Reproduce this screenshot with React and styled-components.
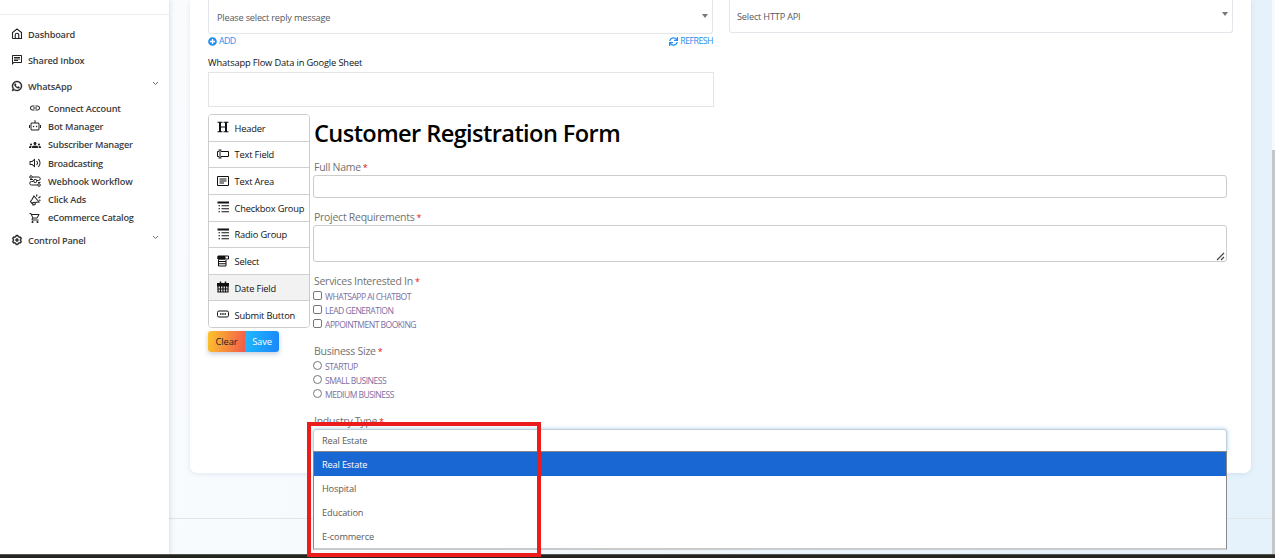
import styled, { createGlobalStyle } from "styled-components";
import {
  RiWhatsappLine,
  RiRobot2Line,
  RiVolumeUpLine,
  RiSettings3Line,
} from "react-icons/ri";
import {
  MdGroups,
  MdLink,
  MdOutlineChat,
  MdOutlineShoppingCart,
} from "react-icons/md";
import { FaPlusCircle, FaSync } from "react-icons/fa";

const GlobalStyle = createGlobalStyle`
  * {
    box-sizing: border-box;
  }
  body {
    margin: 0;
    overflow: hidden;
    font-family: "Open Sans", "Noto Sans", sans-serif;
  }
`;

const Page = styled.div`
  display: flex;
  flex-direction: column;
  width: 1275px;
  height: 558px;
`;

const Body = styled.div`
  display: flex;
  height: 554px;
`;

const Taskbar = styled.div`
  height: 4px;
  background: #23231f;
  border-top: 1px solid #55554f;
`;

const Sidebar = styled.nav`
  width: 169px;
  padding-top: 14px;
  background: #fff;
  box-shadow: 0 0 6px rgba(70, 90, 110, 0.25);
  z-index: 1;
`;

const Divider = styled.div`
  height: 1px;
  margin-bottom: 6px;
  background: #ededed;
`;

const Item = styled.div`
  display: flex;
  align-items: center;
  height: 26px;
  padding: 0 10px 0 11px;
  color: #3c3c3c;
  font-size: 9.2px;
  font-weight: 600;
  letter-spacing: ${(props) => props.$spacing || "-0.18px"};

  svg {
    width: 12px;
    height: 12px;
    margin-right: 5px;
    flex: none;
    color: #222;
  }
`;

const Chevron = styled.svg`
  && {
    width: 7px;
    height: 5px;
    margin: -5px 0 0 auto;
  }
`;

const SubItem = styled(Item)`
  height: 18.3px;
  padding-left: 29px;
  letter-spacing: ${(props) => props.$spacing || "-0.15px"};

  svg {
    margin-right: 7px;
  }
`;

const Main = styled.main`
  flex: 1;
  display: flex;
  flex-direction: column;
  background: linear-gradient(100deg, #fafcfe 0%, #f0f7fc 45%, #e5f2fb 85%);
`;

const Card = styled.section`
  width: 1061px;
  height: 473px;
  margin-left: 21px;
  padding: 0 18px;
  background: #fff;
  border-radius: 0 0 7px 7px;
  box-shadow: 0 1px 5px rgba(100, 130, 160, 0.16);
`;

const Footer = styled.footer`
  margin-top: 45px;
  border-top: 1px solid #e0e5e8;
`;

const Scrollbar = styled.div`
  width: 3px;
  padding-top: 150px;
  background: #f8f9fa;
`;

const Thumb = styled.div`
  height: 404px;
  background: #c6c6c6;
`;

const TopRow = styled.div`
  display: flex;
  gap: 16px;
  height: 49px;
`;

const Column = styled.div`
  width: ${(props) => props.$width};
`;

const SelectBox = styled.div`
  display: flex;
  justify-content: space-between;
  align-items: center;
  height: ${(props) => props.$height};
  padding: ${(props) => props.$padding};
  border: 1px solid #e2e6ea;
  border-top: 0;
  border-radius: 0 0 3px 3px;
  color: #55595e;
  font-size: 9.2px;
  letter-spacing: -0.2px;
`;

const Arrow = styled.span`
  margin-top: -4px;
  border: 3px solid transparent;
  border-top: 4px solid #777;
  border-bottom: 0;
`;

const Links = styled.div`
  display: flex;
  justify-content: space-between;
  padding-top: 1px;
  color: #1f8ef1;
  font-size: 8.8px;
  line-height: 13px;
`;

const Link = styled.a`
  display: flex;
  align-items: center;
  gap: 2px;
  letter-spacing: -0.55px;

  svg {
    width: 9px;
    height: 9px;
  }
`;

const SheetLabel = styled.label`
  display: block;
  height: 23px;
  padding-top: 7px;
  color: #111;
  font-size: 9.3px;
  line-height: 14px;
  letter-spacing: -0.15px;
`;

const SheetInput = styled.div`
  width: 506px;
  height: 35px;
  border: 1px solid #e2e4e6;
`;

const Builder = styled.div`
  display: flex;
  gap: 4px;
  padding-top: 7px;
`;

const Palette = styled.div`
  width: 102px;
  height: 214px;
  margin-right: -1px;
  border: 1px solid #ccc;
  border-radius: 4px;
  overflow: hidden;
`;

const PaletteItem = styled.div`
  display: flex;
  align-items: center;
  height: 26.65px;
  padding: 1px 0 0 7.5px;
  border-bottom: 1px solid #cfcfcf;
  background: ${(props) => (props.$active ? "#f2f2f2" : "#fff")};
  color: #111;
  font-size: 9.3px;
  white-space: nowrap;
  letter-spacing: -0.17px;

  svg {
    width: 12px;
    height: 12px;
    margin: -2px 6px 0 0;
    flex: none;
  }

  &:last-child {
    border-bottom: 0;
  }
`;

const Buttons = styled.div`
  display: flex;
  width: 71px;
  height: 21px;
  margin-top: 3px;
  border-radius: 3px;
  overflow: hidden;
  box-shadow: 0 2px 5px rgba(60, 90, 130, 0.3);
`;

const Button = styled.button`
  width: ${(props) => props.$width};
  padding: 0;
  border: 0;
  background: ${(props) => props.$background};
  color: ${(props) => props.$color};
  font: 9.3px "Open Sans", sans-serif;
  letter-spacing: -0.1px;
`;

const Form = styled.form`
  width: 914px;
`;

const Title = styled.h1`
  height: 45px;
  margin: 0;
  padding-left: 1px;
  color: #000;
  font-size: 23.6px;
  line-height: 38px;
  font-weight: 600;
  letter-spacing: -0.6px;
`;

const Label = styled.div`
  height: 16px;
  padding: 1px 0 0 1px;
  color: #727272;
  font-size: 10.5px;
  line-height: 15px;
  letter-spacing: -0.27px;

  span {
    margin-left: -0.5px;
    color: #e02020;
    font-size: 9px;
  }
`;

const Input = styled.div`
  height: 23px;
  margin-bottom: 11px;
  border: 1px solid #ccc;
  border-radius: 3px;
`;

const TextArea = styled.div`
  display: flex;
  justify-content: flex-end;
  align-items: flex-end;
  height: 37px;
  margin-bottom: 11px;
  border: 1px solid #ccc;
  border-radius: 3px;
`;

const Options = styled.div`
  height: 54px;
`;

const Option = styled.div`
  display: flex;
  align-items: center;
  gap: 3px;
  height: 14px;
  color: #7b6fa3;
  font-size: 8.6px;
  letter-spacing: -0.54px;

  span {
    padding-top: 2px;
  }
`;

const Mark = styled.i`
  width: 9px;
  height: 9px;
  margin-top: -1px;
  border: 1px solid #777;
  border-radius: ${(props) => (props.$round ? "50%" : "2px")};
`;

const Dropdown = styled.div`
  position: relative;
`;

const Current = styled.div`
  height: 23px;
  padding-left: 8px;
  border: 1px solid #c5cdd5;
  border-radius: 3px 3px 0 0;
  background: #fff;
  box-shadow: 0 0 4px rgba(102, 175, 233, 0.6);
  color: #5a5a5a;
  font-size: 9.2px;
  line-height: 22px;
  letter-spacing: -0.15px;
`;

const Menu = styled.div`
  position: absolute;
  z-index: 2;
  top: 22px;
  left: 0;
  width: 914px;
  height: 99px;
  border: 1px solid #888;
  border-bottom: 2px solid #c8cacc;
  background: #fff;
`;

const MenuItem = styled.div`
  height: 24px;
  padding-left: 8px;
  background: ${(props) => (props.$active ? "#1967d2" : "#fff")};
  color: ${(props) => (props.$active ? "#fff" : "#5a5a5a")};
  font-size: 9.2px;
  line-height: 25px;
  letter-spacing: -0.15px;
`;

const Highlight = styled.div`
  position: absolute;
  z-index: 3;
  top: -7px;
  left: -6px;
  width: 234px;
  height: 135px;
  border: 4px solid #ed1c1c;
`;

const HomeIcon = () => (
  <svg viewBox="0 0 24 24" fill="none" stroke="currentColor" strokeWidth="2.2">
    <path d="M3 21V9l9-7 9 7v12H3M8.5 21v-7a3.5 3.5 0 0 1 7 0v7" />
  </svg>
);

const FlowIcon = () => (
  <svg viewBox="0 0 24 24" fill="none" stroke="currentColor" strokeWidth="2">
    <circle cx="4" cy="4" r="2.6" />
    <circle cx="20" cy="20" r="2.6" />
    <path d="M7 4h12a3 3 0 0 1 0 7h-3M9 13H5a3 3 0 0 0 0 7h12" />
    <circle cx="12.5" cy="12" r="3.2" />
    <path d="M2 9h6M18 15h5" />
  </svg>
);

const AdsIcon = () => (
  <svg viewBox="0 0 24 24" fill="none" stroke="currentColor" strokeWidth="2.2">
    <path d="M10 4l10 12-11 1-4 1-2-3 3-4zM7 18l1 4 4-1 1-4M15 5l1-4M19 8l4-3M20 12l3 1" />
  </svg>
);

const HeaderIcon = () => (
  <svg viewBox="0 0 24 24" fill="none" stroke="currentColor">
    <path d="M6 2v20M18 2v20" strokeWidth="4" />
    <path d="M1 2.5h10M13 2.5h10M1 21.5h10M13 21.5h10M6 12h12" strokeWidth="2" />
  </svg>
);

const TextFieldIcon = () => (
  <svg viewBox="0 0 24 24" fill="none" stroke="currentColor" strokeWidth="2">
    <path d="M6 4v16M3 4h6M3 20h6M4 7H1v10h3M8 7h15v10H8" />
  </svg>
);

const TextAreaIcon = () => (
  <svg viewBox="0 0 24 24" fill="none" stroke="currentColor" strokeWidth="2">
    <path d="M1 3h22v18H1z" />
    <path d="M5 8h14M5 12h14M5 16h9" strokeWidth="2.4" />
  </svg>
);

const ListIcon = () => (
  <svg viewBox="0 0 24 24" fill="none" stroke="currentColor">
    <path d="M1 3h23" strokeWidth="4" />
    <path d="M9 9.5h15M9 15.5h15M9 21.5h15" strokeWidth="2" />
    <path d="M3 9.5h3M3 15.5h3M3 21.5h3" strokeWidth="2" />
  </svg>
);

const SelectIcon = () => (
  <svg viewBox="0 0 24 24" fill="none" stroke="currentColor" strokeWidth="2">
    <path d="M2 2h21v6H2z" />
    <path d="M2 3h14v5H2z" fill="currentColor" />
    <path d="M3 10v12h15V10M3 13h15M3 17.5h15" />
  </svg>
);

const CalendarIcon = () => (
  <svg viewBox="0 0 24 24" fill="none" stroke="currentColor" strokeWidth="2.4">
    <path d="M1 5h22v5H1z" fill="currentColor" />
    <path d="M2 10v12h20V10M2 16h20M7 9v13M12 9v13M17 9v13" />
    <path d="M7 1v5M17 1v5" strokeWidth="3" />
  </svg>
);

const ButtonIcon = () => (
  <svg viewBox="0 0 24 24" fill="none" stroke="currentColor" strokeWidth="2">
    <rect x="1" y="6" width="22" height="12" rx="3" />
    <path d="M6 12h12" strokeWidth="3" strokeDasharray="3 1.5" />
  </svg>
);

const Grip = () => (
  <svg width="10" height="10" viewBox="0 0 10 10" stroke="#444">
    <path d="M1 9l7-7M5 9l3-3" strokeWidth="1.2" />
  </svg>
);

const Down = () => (
  <Chevron viewBox="0 0 7 5" fill="none" stroke="#777">
    <path d="M1 1l2.5 2.5L6 1" />
  </Chevron>
);

const subItems = [
  { text: "Connect Account", icon: MdLink },
  { text: "Bot Manager", icon: RiRobot2Line },
  { text: "Subscriber Manager", icon: MdGroups, spacing: "-0.23px" },
  { text: "Broadcasting", icon: RiVolumeUpLine, spacing: "-0.27px" },
  { text: "Webhook Workflow", icon: FlowIcon },
  { text: "Click Ads", icon: AdsIcon },
  { text: "eCommerce Catalog", icon: MdOutlineShoppingCart, spacing: "-0.2px" },
];

const fields = [
  { text: "Header", icon: HeaderIcon },
  { text: "Text Field", icon: TextFieldIcon },
  { text: "Text Area", icon: TextAreaIcon },
  { text: "Checkbox Group", icon: ListIcon },
  { text: "Radio Group", icon: ListIcon },
  { text: "Select", icon: SelectIcon },
  { text: "Date Field", icon: CalendarIcon, active: true },
  { text: "Submit Button", icon: ButtonIcon },
];

const services = ["WHATSAPP AI CHATBOT", "LEAD GENERATION", "APPOINTMENT BOOKING"];
const sizes = ["STARTUP", "SMALL BUSINESS", "MEDIUM BUSINESS"];
const industries = ["Real Estate", "Hospital", "Education", "E-commerce"];

const App = () => {
  return (
    <Page>
      <GlobalStyle />
      <Body>
        <Sidebar>
          <Divider />
          <Item>
            <HomeIcon />
            Dashboard
          </Item>
          <Item>
            <MdOutlineChat />
            Shared Inbox
          </Item>
          <Item>
            <RiWhatsappLine stroke="currentColor" strokeWidth="0.8" />
            WhatsApp
            <Down />
          </Item>
          {subItems.map(({ text, icon: Icon, spacing }) => (
            <SubItem key={text} $spacing={spacing}>
              <Icon />
              {text}
            </SubItem>
          ))}
          <Item>
            <RiSettings3Line stroke="currentColor" strokeWidth="0.8" />
            Control Panel
            <Down />
          </Item>
        </Sidebar>
        <Main>
          <Card>
            <TopRow>
              <Column $width="505px">
                <SelectBox $height="34px" $padding="2px 4px 0 8px">
                  Please select reply message
                  <Arrow />
                </SelectBox>
                <Links>
                  <Link>
                    <FaPlusCircle />
                    ADD
                  </Link>
                  <Link>
                    <FaSync />
                    REFRESH
                  </Link>
                </Links>
              </Column>
              <Column $width="504px">
                <SelectBox $height="33px" $padding="0 4px 0 7px">
                  Select HTTP API
                  <Arrow />
                </SelectBox>
              </Column>
            </TopRow>
            <SheetLabel>Whatsapp Flow Data in Google Sheet</SheetLabel>
            <SheetInput />
            <Builder>
              <div>
                <Palette>
                  {fields.map(({ text, icon: Icon, active }) => (
                    <PaletteItem key={text} $active={active}>
                      <Icon />
                      {text}
                    </PaletteItem>
                  ))}
                </Palette>
                <Buttons>
                  <Button
                    type="button"
                    $width="37px"
                    $color="#222"
                    $background="linear-gradient(100deg, #fcc42c, #f2594b)"
                  >
                    Clear
                  </Button>
                  <Button
                    type="button"
                    $width="34px"
                    $color="#fff"
                    $background="linear-gradient(100deg, #1fb9fb, #1b86fb)"
                  >
                    Save
                  </Button>
                </Buttons>
              </div>
              <Form>
                <Title>Customer Registration Form</Title>
                <Label>
                  Full Name <span>*</span>
                </Label>
                <Input />
                <Label>
                  Project Requirements <span>*</span>
                </Label>
                <TextArea>
                  <Grip />
                </TextArea>
                <Label>
                  Services Interested In <span>*</span>
                </Label>
                <Options>
                  {services.map((text) => (
                    <Option key={text}>
                      <Mark />
                      <span>{text}</span>
                    </Option>
                  ))}
                </Options>
                <Label>
                  Business Size <span>*</span>
                </Label>
                <Options>
                  {sizes.map((text) => (
                    <Option key={text}>
                      <Mark $round />
                      <span>{text}</span>
                    </Option>
                  ))}
                </Options>
                <Label>
                  Industry Type <span>*</span>
                </Label>
                <Dropdown>
                  <Current>Real Estate</Current>
                  <Menu>
                    {industries.map((text, i) => (
                      <MenuItem key={text} $active={i === 0}>
                        {text}
                      </MenuItem>
                    ))}
                  </Menu>
                  <Highlight />
                </Dropdown>
              </Form>
            </Builder>
          </Card>
          <Footer />
        </Main>
        <Scrollbar>
          <Thumb />
        </Scrollbar>
      </Body>
      <Taskbar />
    </Page>
  );
};

export default App;
